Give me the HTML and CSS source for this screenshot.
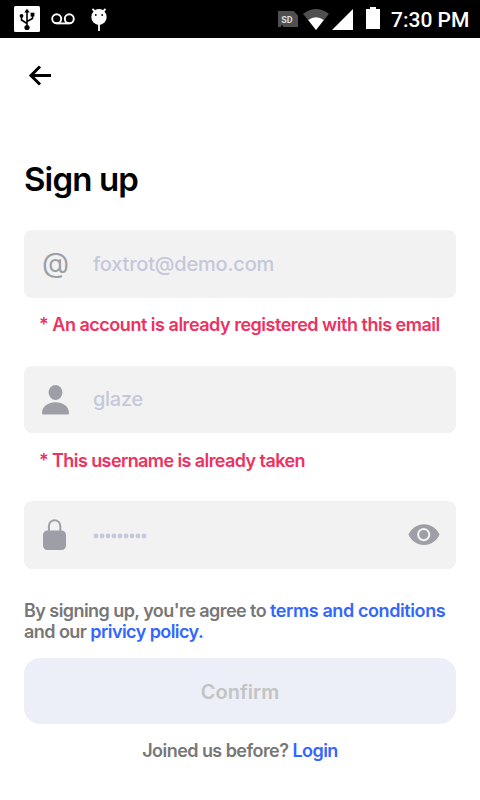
FILE: index.html
```html
<!DOCTYPE html>
<html lang="en">
<head>
<meta charset="utf-8">
<meta name="viewport" content="width=device-width, initial-scale=1">
<title>Sign up</title>
<link rel="stylesheet" href="styles.css">
</head>
<body>
<header class="status">
  <div class="notifications">
    <svg width="26" height="26" viewBox="0 0 26 26"><rect width="26" height="26" rx="1.5" fill="#fff"/><path d="M13 5v16M13 17.500l-5.500-3.500V10M13 15.500l5.500-3V8.500" fill="none" stroke="#000" stroke-width="1.600"/><path d="M10.300 6.500 13 2.800l2.700 3.700z"/><circle cx="13" cy="21.500" r="2.600"/><circle cx="7.500" cy="9.800" r="1.900"/><path d="M16.600 6.700h3.800v3.800h-3.800z"/></svg>
    <svg class="voicemail" width="24" height="12" viewBox="0 0 24 12" fill="none" stroke="#fff" stroke-width="1.900"><circle cx="5.700" cy="5.800" r="4.500"/><circle cx="18.300" cy="5.800" r="4.500"/><path d="M5.700 10.400h12.600"/></svg>
    <svg class="droid" width="16" height="24" viewBox="0 0 16 24"><ellipse cx="8" cy="9" rx="7.700" ry="7.900" fill="#fff"/><path d="m1.500 1 3 3M14.500 1l-3 3M8 16v7" stroke="#fff" stroke-width="1.800"/><circle cx="4.800" cy="7" r=".9"/><circle cx="11.200" cy="7" r=".9"/></svg>
  </div>
  <div class="system">
    <svg width="20" height="16" viewBox="0 0 20 16"><path d="M0 0h15.500l4.500 4.500V16H0z" fill="#505050"/><path d="M3 14.500h2V16H3z"/><text class="sd" x="3.200" y="11.500">SD</text></svg>
    <svg class="wifi" width="26" height="21" viewBox="0 0 26 21"><path d="M0 4.800Q13-4.600 26 4.800L13 21z" fill="#505050"/><path d="M5.200 11.100q7.800-5.800 15.600 0L13 21z" fill="#fff"/></svg>
    <svg class="signal" width="21" height="21" viewBox="0 0 21 21"><path d="M21 0v21H0z" fill="#fff"/></svg>
    <svg class="battery" width="14" height="22" viewBox="0 0 14 22"><path d="M4 0h6v2h4v20H0V2h4z" fill="#fff"/></svg>
    <span class="clock">7:30 PM</span>
  </div>
</header>
<main class="screen">
  <a class="back" href="#" aria-label="Back"><svg width="24" height="22" viewBox="0 0 24 22" fill="none" stroke="#000" stroke-width="3"><path d="M23 10.500H3M12 1.500 3 10.500l9 9"/></svg></a>
  <h1 class="title">Sign up</h1>
  <form class="form">
    <label class="field">
      <span class="icon at">@</span>
      <span class="value email">foxtrot@demo.com</span>
    </label>
    <p class="error">* An account is already registered with this email</p>
    <label class="field user">
      <svg class="icon" width="28" height="30" viewBox="0 0 28 30" fill="#9e9ea7"><ellipse cx="13.500" cy="7.500" rx="6.900" ry="7.500"/><path d="M1.500 29.500Q0 29.500 0 28C0 21.500 6 17.300 13.500 17.300S27 21.500 27 28q0 1.500-1.500 1.500z"/></svg>
      <span class="value name">glaze</span>
    </label>
    <p class="error name-error">* This username is already taken</p>
    <label class="field">
      <svg class="icon" width="28" height="32" viewBox="0 0 28 32" fill="none"><path d="M6.900 13V6.900a5.700 5.700 0 0 1 11.400 0V13" stroke="#9e9ea7" stroke-width="2"/><rect x="1" y="11.500" width="23" height="19.500" rx="4.500" fill="#9e9ea7"/></svg>
      <svg class="value dots" width="54" height="6" viewBox="0 0 54 6" fill="none"><path d="M3 3h48.100" stroke="#c5c8da" stroke-width="4.800" stroke-linecap="round" stroke-dasharray="0 6"/></svg>
      <svg class="eye" width="32" height="22" viewBox="0 0 32 22"><path d="M.5 10.500C3 4.500 9 .2 16 .2s13 4.300 15.500 10.300C29 16.500 23 21 16 21S3 16.500.5 10.500z" fill="#9e9ea7"/><circle cx="15.700" cy="10.600" r="5.600" fill="none" stroke="#f2f2f2" stroke-width="2"/></svg>
    </label>
    <p class="terms">By signing up, you're agree to <a class="conditions" href="#">terms and conditions</a><br>and our <a href="#">privicy policy.</a></p>
    <button class="confirm" type="button" disabled>Confirm</button>
  </form>
  <p class="login">Joined us before? <a href="#">Login</a></p>
</main>
</body>
</html>
```
FILE: styles.css
```css
* { box-sizing: border-box; }
body { margin: 0; background: #fff; font-family: Inter, sans-serif; color: #000; }
p, h1 { margin: 0; white-space: nowrap; }
a { color: #3366ff; text-decoration: none; }
svg { flex: none; display: block; }
.status { height: 38px; background: #000; display: flex; align-items: center; justify-content: space-between; padding: 0 11px 0 14px; }
.notifications, .system { display: flex; align-items: center; }
.voicemail { margin-left: 11px; }
.droid { margin-left: 16px; margin-top: 1px; }
.wifi { margin-left: 5px; }
.signal { margin-left: 3px; }
.battery { margin-left: 13px; margin-top: -2px; }
.clock { margin-left: 11px; padding-top: 2px; font: 500 21px/38px Roboto, sans-serif; color: #fff; white-space: nowrap; width: 78px; }
.sd { font: 700 9px Roboto, sans-serif; fill: #ddd; }
.screen { padding: 27px 24px 0; }
.back { display: block; width: 24px; margin-left: 4px; }
.title { margin-top: 71px; height: 72px; font-size: 33px; line-height: 42px; font-weight: 600; letter-spacing: -.85px; }
.field { display: flex; align-items: center; height: 68px; padding: 0 16px 0 18px; border-radius: 8px; background: #f2f2f2; }
.user { height: 67px; }
.icon { width: 28px; }
.at { color: #9e9ea7; font-size: 28px; line-height: 30px; margin-top: -3px; }
.value { margin-left: 23px; font-size: 20px; line-height: 28px; font-weight: 500; color: #c5c8da; letter-spacing: -.2px; }
.name { margin-top: -1px; letter-spacing: -.3px; }
.dots { margin-top: 1px; }
.eye { margin-left: auto; }
.error { height: 68px; padding: 14px 0 0 15px; font-size: 18px; line-height: 26px; font-weight: 600; color: #ee3160; letter-spacing: -.48px; }
.name-error { padding-top: 15px; letter-spacing: -.59px; }
.terms { margin-top: 31px; height: 58px; font-size: 18px; line-height: 21px; font-weight: 600; color: #777; letter-spacing: -.56px; }
.conditions { letter-spacing: -.4px; }
.confirm { display: block; width: 100%; height: 66px; padding: 2px 0 0; border: 0; border-radius: 16px; background: #eceff7; color: #c3c3c3; font: 600 20px Inter, sans-serif; }
.login { margin-top: 14px; text-align: center; font-size: 18px; line-height: 26px; font-weight: 600; color: #777; letter-spacing: -.55px; }
```
